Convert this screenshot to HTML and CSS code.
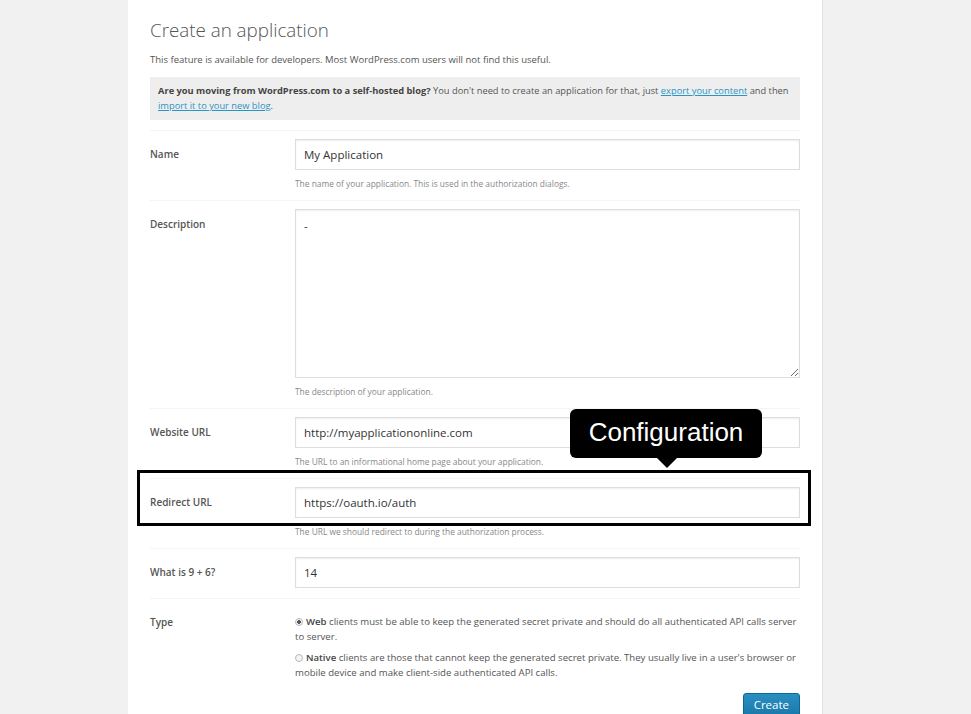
FILE: index.html
```html
<!DOCTYPE html>
<html>
<head>
<meta charset="utf-8">
<link rel="stylesheet" href="styles.css">
</head>
<body>
<div class="page">
  <div class="panel">
    <h1 class="title">Create an application</h1>
    <p class="intro">This feature is available for developers. Most WordPress.com users will not find this useful.</p>
    <div class="notice"><strong>Are you moving from WordPress.com to a self-hosted blog?</strong> You don't need to create an application for that, just <a href="#">export your content</a> and then <a href="#">import it to your new blog</a>.</div>

    <div class="form">
      <div class="row">
        <div class="label">Name</div>
        <div class="field">
          <input class="text" type="text" value="My Application">
          <div class="help">The name of your application. This is used in the authorization dialogs.</div>
        </div>
      </div>
      <div class="row">
        <div class="label">Description</div>
        <div class="field">
          <textarea class="area">-</textarea>
          <div class="help">The description of your application.</div>
        </div>
      </div>
      <div class="row">
        <div class="label">Website URL</div>
        <div class="field">
          <input class="text" type="text" value="http://myapplicationonline.com">
          <div class="help">The URL to an informational home page about your application.</div>
        </div>
      </div>
      <div class="row">
        <div class="label">Redirect URL</div>
        <div class="field">
          <input class="text" type="text" value="https://oauth.io/auth">
          <div class="help">The URL we should redirect to during the authorization process.</div>
        </div>
      </div>
      <div class="row">
        <div class="label">What is 9 + 6?</div>
        <div class="field">
          <input class="text" type="text" value="14">
        </div>
      </div>
      <div class="row row-type">
        <div class="label">Type</div>
        <div class="field">
          <p class="choice"><span class="radio checked"></span><strong>Web</strong> clients must be able to keep the generated secret private and should do all authenticated API calls server to server.</p>
          <p class="choice"><span class="radio"></span><strong>Native</strong> clients are those that cannot keep the generated secret private. They usually live in a user's browser or mobile device and make client-side authenticated API calls.</p>
          <div class="actions"><button class="btn">Create</button></div>
        </div>
      </div>
    </div>

    <div class="highlight"></div>
    <div class="tooltip">Configuration</div>
  </div>
</div>
</body>
</html>
```
FILE: styles.css
```css
html, body {
  margin: 0;
  padding: 0;
  background: #f1f1f1;
  height: 100%;
  overflow: hidden;
}
.page {
  display: flex;
  padding-left: 128px;
}
.panel {
  position: relative;
  width: 650px;
  padding: 18px 22px 40px 22px;
  background: #fff;
  border-right: 1px solid #e2e2e2;
  font-family: "Open Sans", "DejaVu Sans", sans-serif;
  color: #555;
  min-height: 760px;
}
.title {
  margin: 0 0 10px 0;
  font-size: 18.8px;
  line-height: 25px;
  font-weight: 300;
  color: #555;
}
.intro {
  margin: 0 0 10px 0;
  font-size: 9.5px;
  line-height: 14px;
  color: #555;
}
.notice {
  background: #eeeeee;
  padding: 6px 8px 7px 8px;
  font-size: 9.3px;
  line-height: 15px;
  color: #555;
}
.notice strong { font-weight: 700; color: #444; }
.notice a { color: #2a95c5; text-decoration: underline; }
.form { margin-top: 10px; }
.row {
  display: grid;
  grid-template-columns: 145px 505px;
  border-top: 1px solid #f4f4f4;
  padding: 8px 0 10px 0;
}
.label {
  margin-top: 8px;
  font-size: 10px;
  line-height: 14px;
  font-weight: 600;
  color: #555;
}
.text, .area {
  display: block;
  box-sizing: border-box;
  width: 505px;
  margin: 0;
  border: 1px solid #dddddd;
  box-shadow: inset 0 1px 2px rgba(0,0,0,0.07);
  font-family: "Open Sans", "DejaVu Sans", sans-serif;
  font-size: 11.5px;
  color: #333;
  background: #fff;
  outline: none;
}
.text {
  height: 31px;
  padding: 0 8px;
}
.area {
  height: 169px;
  padding: 8px;
  line-height: 16px;
  resize: vertical;
}
.help {
  margin-top: 7px;
  font-size: 8.4px;
  line-height: 13px;
  color: #888;
}
.choice {
  margin: 7px 0 6px 0;
  font-size: 9.6px;
  line-height: 15px;
  color: #555;
}
.choice + .choice { margin-top: 0; }
.choice strong { font-weight: 600; color: #444; }
.radio {
  display: inline-block;
  box-sizing: border-box;
  width: 8px;
  height: 8px;
  margin-right: 3px;
  border: 1px solid #b4b9be;
  border-radius: 50%;
  vertical-align: -1px;
  background: #f4f4f4;
}
.radio.checked {
  background: radial-gradient(circle, #555 0 1.6px, #f4f4f4 2px);
}
.actions {
  display: flex;
  justify-content: flex-end;
  margin-top: 13px;
}
.btn {
  height: 24px;
  padding: 0 10px;
  border: 1px solid #0a6a96;
  border-radius: 3px;
  background: linear-gradient(#2a8fc2, #1a78aa);
  color: #fff;
  font-family: "Open Sans", "DejaVu Sans", sans-serif;
  font-size: 11.5px;
  line-height: 22px;
}
.highlight {
  position: absolute;
  left: 9px;
  top: 470px;
  width: 668px;
  height: 50px;
  border: 3px solid #000;
  pointer-events: none;
}
.tooltip {
  position: absolute;
  left: 442px;
  top: 409px;
  width: 192px;
  height: 49px;
  box-sizing: border-box;
  background: #000;
  border-radius: 6px;
  color: #fff;
  font-family: "Liberation Sans", Arial, sans-serif;
  font-size: 26px;
  line-height: 47px;
  text-align: center;
}
.tooltip::after {
  content: "";
  position: absolute;
  left: 87px;
  top: 49px;
  border-left: 10px solid transparent;
  border-right: 10px solid transparent;
  border-top: 10px solid #000;
}
```
